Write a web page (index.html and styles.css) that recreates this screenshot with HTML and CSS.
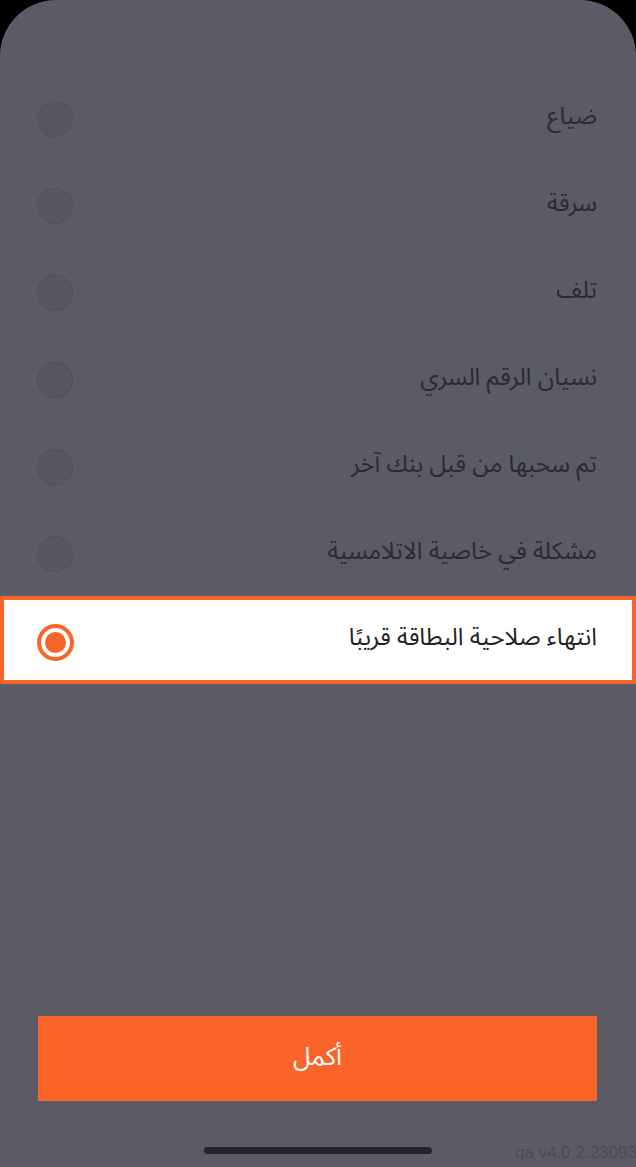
FILE: index.html
```html
<!DOCTYPE html>
<html lang="ar" dir="rtl">
<head>
<meta charset="utf-8">
<title>سبب الاستبدال</title>
<link rel="stylesheet" href="styles.css">
</head>
<body>
<div class="sheet">
  <div class="header"></div>
  <ul class="options">
    <li class="option"><span class="label">ضياع</span><span class="radio"></span></li>
    <li class="option"><span class="label">سرقة</span><span class="radio"></span></li>
    <li class="option"><span class="label">تلف</span><span class="radio"></span></li>
    <li class="option"><span class="label">نسيان الرقم السري</span><span class="radio"></span></li>
    <li class="option"><span class="label">تم سحبها من قبل بنك آخر</span><span class="radio"></span></li>
    <li class="option"><span class="label">مشكلة في خاصية الاتلامسية</span><span class="radio"></span></li>
    <li class="option selected"><span class="label">انتهاء صلاحية البطاقة قريبًا</span><span class="radio"><span class="dot"></span></span></li>
  </ul>
  <div class="spacer"></div>
  <div class="actions">
    <button class="continue">أكمل</button>
  </div>
  <div class="footer">
    <div class="home-indicator"></div>
  </div>
  <div class="version" dir="ltr">qa v4.0.2.23093</div>
</div>
</body>
</html>
```

FILE: styles.css
```css
html, body {
  margin: 0;
  padding: 0;
  background: #000;
}

body {
  font-family: "Noto Sans Arabic", "DejaVu Sans", "Noto Sans", sans-serif;
}

.sheet {
  position: relative;
  width: 636px;
  height: 1167px;
  background: #5b5b66;
  border-radius: 56px 56px 0 0;
  overflow: hidden;
  display: flex;
  flex-direction: column;
}

.header {
  height: 76px;
  flex: none;
  border-bottom: 1px solid rgba(255, 255, 255, 0.018);
  box-sizing: border-box;
}

.options {
  list-style: none;
  margin: 0;
  padding: 0;
}

.option {
  height: 87px;
  box-sizing: border-box;
  display: flex;
  align-items: center;
  justify-content: space-between;
  padding: 0 39px 0 37px;
  border-bottom: 1px solid rgba(255, 255, 255, 0.018);
}

.label {
  font-size: 24px;
  color: #2a2a33;
  line-height: 1;
  margin-top: -4px;
}

.radio {
  width: 36px;
  height: 36px;
  box-sizing: border-box;
  border-radius: 50%;
  background: #575762;
  border: 1px solid #50505b;
  display: flex;
  align-items: center;
  justify-content: center;
}

.option.selected {
  height: 88px;
  margin-top: -2px;
  background: #fff;
  border: 4px solid #f7652a;
  padding: 0 35px 0 33px;
}

.option.selected .label {
  color: #222;
}

.option.selected .radio {
  width: 37px;
  height: 37px;
  background: #fff;
  border: 4px solid #f7652a;
  margin-top: 5px;
}

.dot {
  width: 21px;
  height: 21px;
  border-radius: 50%;
  background: #f7652a;
}

.spacer {
  flex: 1;
}

.actions {
  padding: 0 39px 0 38px;
}

.continue {
  display: block;
  width: 100%;
  height: 85px;
  border: 0;
  border-radius: 0;
  background: #f96528;
  color: #fff;
  font-family: inherit;
  font-size: 25px;
  padding-bottom: 4px;
  cursor: pointer;
}

.footer {
  height: 66px;
  display: flex;
  justify-content: center;
  align-items: flex-start;
}

.home-indicator {
  margin-top: 46px;
  width: 228px;
  height: 7px;
  border-radius: 4px;
  background: #23232d;
}

.version {
  position: absolute;
  left: 515px;
  bottom: 4px;
  font-family: "Liberation Sans", Arial, sans-serif;
  font-size: 17px;
  color: #4c4c57;
  white-space: nowrap;
}
```
